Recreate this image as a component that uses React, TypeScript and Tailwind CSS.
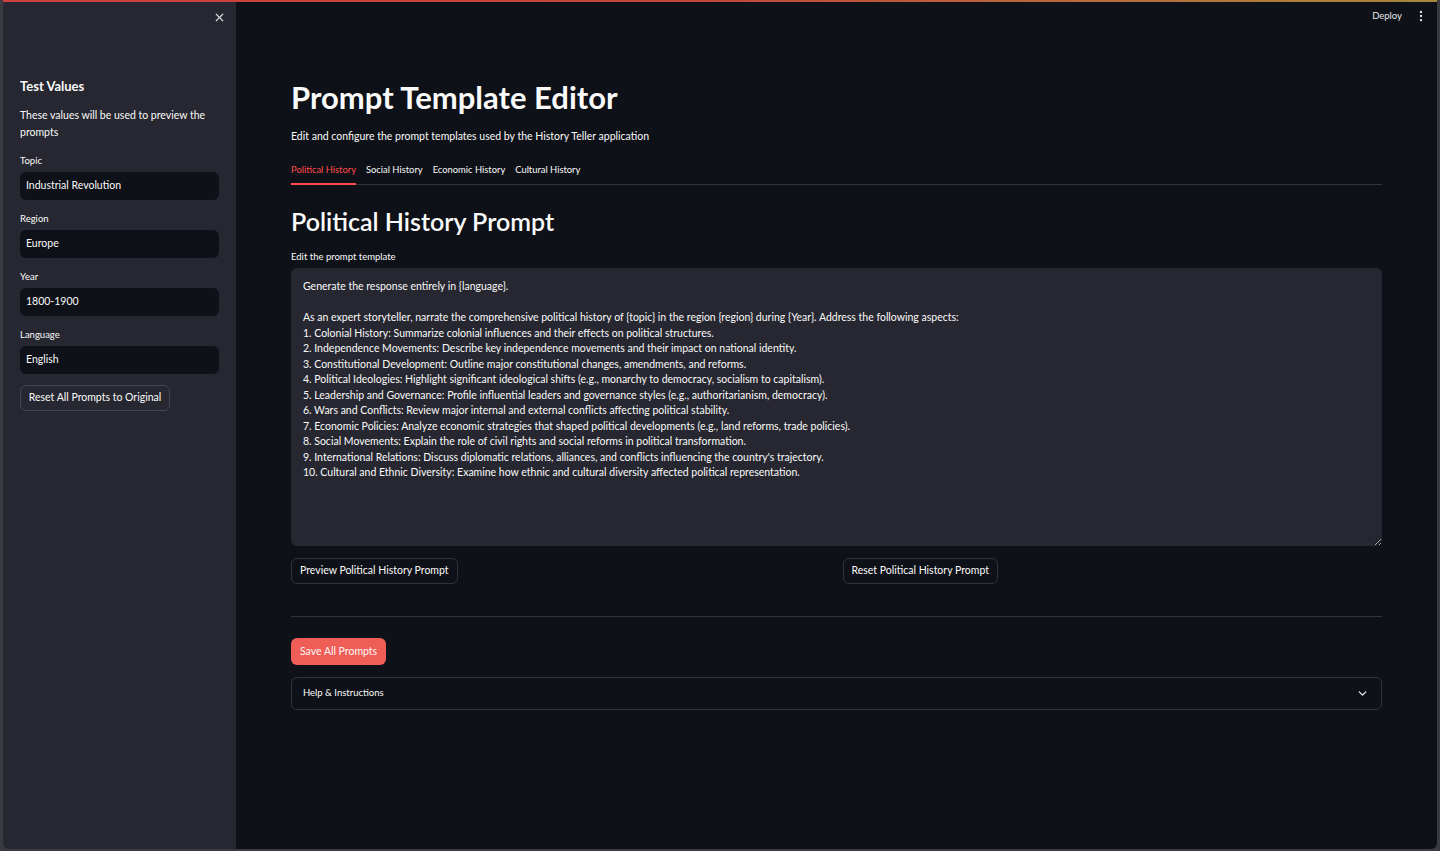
import React from "react";
import { X, EllipsisVertical, ChevronDown } from "lucide-react";

const fields = [
  { label: "Topic", value: "Industrial Revolution" },
  { label: "Region", value: "Europe" },
  { label: "Year", value: "1800-1900" },
  { label: "Language", value: "English" },
];

const tabs = ["Political History", "Social History", "Economic History", "Cultural History"];

const promptText = `Generate the response entirely in {language}.

As an expert storyteller, narrate the comprehensive political history of {topic} in the region {region} during {Year}. Address the following aspects:
1. Colonial History: Summarize colonial influences and their effects on political structures.
2. Independence Movements: Describe key independence movements and their impact on national identity.
3. Constitutional Development: Outline major constitutional changes, amendments, and reforms.
4. Political Ideologies: Highlight significant ideological shifts (e.g., monarchy to democracy, socialism to capitalism).
5. Leadership and Governance: Profile influential leaders and governance styles (e.g., authoritarianism, democracy).
6. Wars and Conflicts: Review major internal and external conflicts affecting political stability.
7. Economic Policies: Analyze economic strategies that shaped political developments (e.g., land reforms, trade policies).
8. Social Movements: Explain the role of civil rights and social reforms in political transformation.
9. International Relations: Discuss diplomatic relations, alliances, and conflicts influencing the country's trajectory.
10. Cultural and Ethnic Diversity: Examine how ethnic and cultural diversity affected political representation.`;

function Sidebar() {
  return (
    <aside className="flex w-[233px] shrink-0 flex-col bg-[#262730] px-[17px]">
      <div className="-mx-[17px] flex h-[34px] items-center justify-end px-[10px]">
        <X size={13} strokeWidth={2.2} className="text-[#d5d6da]" />
      </div>
      <h3 className="mt-[43px] text-[13px] font-bold leading-[18px] text-[#fafafa]">Test Values</h3>
      <p className="mt-[12px] text-[10.5px] leading-[17px] text-[#fafafa]">
        These values will be used to preview the prompts
      </p>
      <div className="mt-[13px] flex flex-col gap-[12px]">
        {fields.map((f) => (
          <div key={f.label}>
            <div className="text-[9.5px] leading-[14px] text-[#fafafa]">{f.label}</div>
            <div className="mt-[4px] flex h-[28px] items-center rounded-[6px] bg-[#0e1117] px-[6px] text-[10.5px] text-[#fafafa]">
              {f.value}
            </div>
          </div>
        ))}
      </div>
      <button className="mt-[11px] h-[26px] w-[150px] rounded-[6px] border border-[#45464d] text-[10.5px] text-[#fafafa]">
        Reset All Prompts to Original
      </button>
    </aside>
  );
}

function Main() {
  return (
    <main className="flex flex-1 flex-col bg-[#0e1117]">
      <div className="flex h-[32px] items-center justify-end gap-[12px] pr-[9px]">
        <span className="text-[9.5px] text-[#e6e7ea]">Deploy</span>
        <EllipsisVertical size={14} className="text-[#e6e7ea]" />
      </div>
      <div className="px-[55px] pt-[47px]">
        <h1 className="text-[31px] font-bold leading-[36px] text-[#fafafa]">Prompt Template Editor</h1>
        <p className="mt-[13px] text-[10.5px] leading-[16px] text-[#fafafa]">
          Edit and configure the prompt templates used by the History Teller application
        </p>
        <div className="mt-[18px] flex gap-[10px] border-b border-[#31333a]">
          {tabs.map((t, i) => (
            <div
              key={t}
              className={
                i === 0
                  ? "-mb-px border-b-2 border-[#ff4b4b] pt-px pb-[6px] text-[9.4px] text-[#ff4b4b]"
                  : "pt-px pb-[6px] text-[9.4px] text-[#fafafa]"
              }
            >
              {t}
            </div>
          ))}
        </div>
        <h2 className="mt-[21px] text-[25px] font-semibold leading-[30px] text-[#fafafa]">Political History Prompt</h2>
        <div className="mt-[15px] text-[9.5px] leading-[12px] text-[#fafafa]">Edit the prompt template</div>
        <textarea
          defaultValue={promptText}
          className="mt-[5px] block h-[278px] w-full resize-y rounded-[6px] bg-[#262730] px-[12px] pt-[11px] text-[10.5px] leading-[15.5px] text-[#fafafa] outline-none"
        />
        <div className="mt-[10px] grid grid-cols-2 gap-[12px]">
          <div>
            <button className="h-[26px] rounded-[6px] border border-[#31333a] px-[8px] text-[10.5px] text-[#fafafa]">
              Preview Political History Prompt
            </button>
          </div>
          <div>
            <button className="h-[26px] rounded-[6px] border border-[#31333a] px-[8px] text-[10.5px] text-[#fafafa]">
              Reset Political History Prompt
            </button>
          </div>
        </div>
        <div className="mt-[32px] border-t border-[#31333a]" />
        <button className="mt-[21px] h-[27px] rounded-[6px] bg-[#ef5d57] px-[9px] text-[10.5px] text-[#fff5f4]">
          Save All Prompts
        </button>
        <div className="mt-[12px] flex h-[33px] items-center justify-between rounded-[6px] border border-[#31333a] pl-[11px] pr-[12px]">
          <span className="text-[9.5px] text-[#fafafa]">Help &amp; Instructions</span>
          <ChevronDown size={13} strokeWidth={2.5} className="text-[#e6e7ea]" />
        </div>
      </div>
    </main>
  );
}

export default function App() {
  return (
    <div className="h-[851px] w-[1440px] overflow-hidden bg-[#3a3b40] font-['Lato',sans-serif]">
      <div className="relative mx-[3px] flex h-[849px] overflow-hidden rounded-b-[6px]">
        <div className="absolute left-0 right-0 top-0 h-[2px] bg-gradient-to-r from-[#cf3f3c] via-[#c2473c] to-[#a8883c]" />
        <Sidebar />
        <Main />
      </div>
    </div>
  );
}
